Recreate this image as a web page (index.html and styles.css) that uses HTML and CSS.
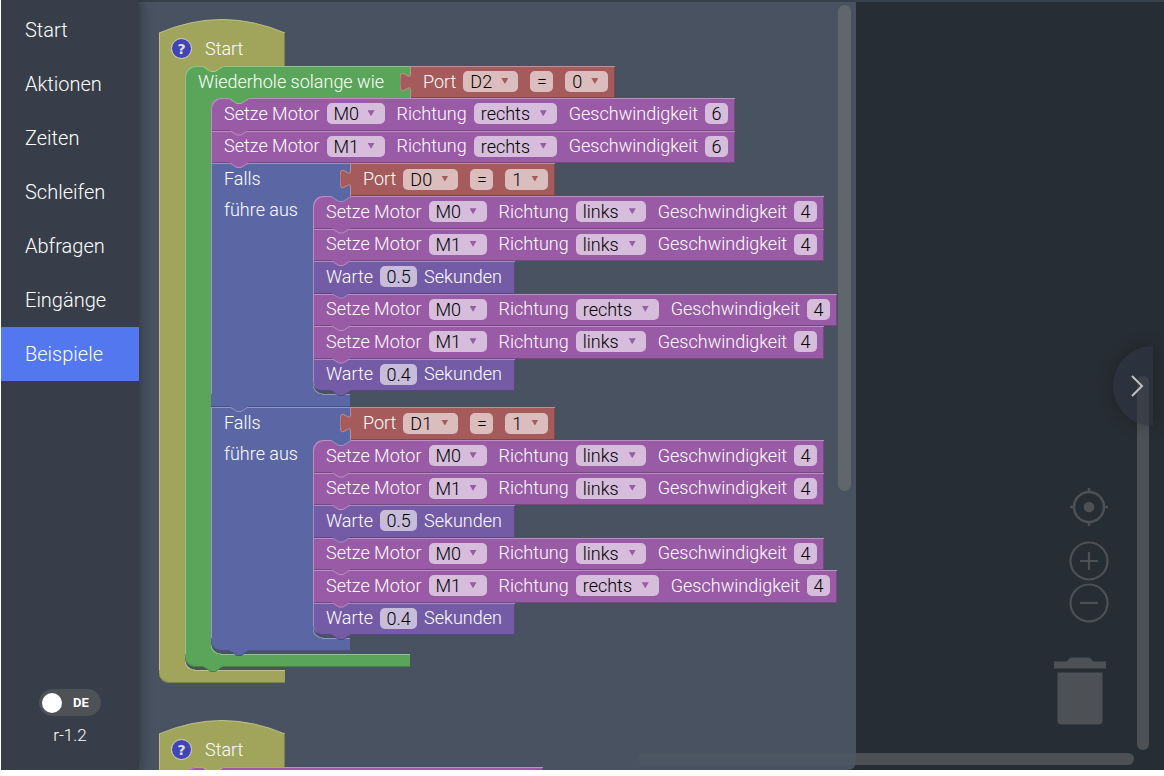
FILE: index.html
```html
<!DOCTYPE html>
<html lang="de">
<head>
<meta charset="utf-8">
<title>Beispiele</title>
<link rel="stylesheet" href="styles.css">
</head>
<body>
<svg class="defs" aria-hidden="true">
  <symbol id="plug" viewBox="-8 0 9 15"><path d="M1 0H0C0 10-8-8-8 7.5S0 5 0 15H1z" fill="#a55b5b"/><path d="M0 0C0 10-8-8-8 7.5S0 5 0 15" fill="none" stroke="#c08c8c" stroke-width=".8"/></symbol>
  <symbol id="hat" viewBox="0 0 126 14"><path d="M0 14Q63-13 126 14z" fill="#a0a55b"/><path d="M0 14Q63-13 126 14" fill="none" stroke="#bdc08c"/></symbol>
</svg>
<div class="app">
  <aside class="sidebar">
    <nav class="menu">
      <a href="#start">Start</a>
      <a href="#aktionen">Aktionen</a>
      <a href="#zeiten">Zeiten</a>
      <a href="#schleifen">Schleifen</a>
      <a href="#abfragen">Abfragen</a>
      <a href="#eingaenge">Eingänge</a>
      <a href="#beispiele" class="active">Beispiele</a>
    </nav>
    <div class="side-foot">
      <button class="lang" type="button"><span class="knob"></span>DE</button>
      <span class="version">r-1.2</span>
    </div>
  </aside>

  <main class="workspace">
    <div class="hbar"></div>
    <div class="vbar"></div>
    <button class="drawer" type="button" aria-label="Öffnen"><svg width="14" height="22" viewBox="0 0 14 22"><path d="M2 1l10 10L2 21" fill="none" stroke="#bfc1c4" stroke-width="2"/></svg></button>
    <div class="tools">
      <button type="button" aria-label="Zentrieren"><svg width="40" height="40" viewBox="0 0 40 40"><circle cx="20" cy="20" r="15" fill="none" stroke="currentColor" stroke-width="2.5"/><circle cx="20" cy="20" r="5.3" fill="currentColor"/><path d="M20 1v4M20 35v4M1 20h4M35 20h4" stroke="currentColor" stroke-width="2.5"/></svg></button>
      <button type="button" class="zoom-in" aria-label="Vergrößern"><svg width="40" height="40" viewBox="0 0 40 40"><circle cx="20" cy="20" r="18.5" fill="none" stroke="currentColor" stroke-width="2.2"/><path d="M20 11v18M11 20h18" stroke="currentColor" stroke-width="2.2"/></svg></button>
      <button type="button" class="zoom-out" aria-label="Verkleinern"><svg width="40" height="40" viewBox="0 0 40 40"><circle cx="20" cy="20" r="18.5" fill="none" stroke="currentColor" stroke-width="2.2"/><path d="M11 20h18" stroke="currentColor" stroke-width="2.2"/></svg></button>
    </div>
    <svg class="trash" width="54" height="68" viewBox="0 0 54 68"><path d="M1 4.500h13q2-4 5-4h16q3 0 5 4h13v7H1zM4.500 15.500h45v48q0 4-4 4h-37q-4 0-4-4z" fill="#4d5055"/></svg>

    <section class="flyout">
      <div class="flybar"></div>

      <div class="wrap start">
        <svg class="hat"><use href="#hat"/></svg>
        <div class="head"><div class="cap"><button class="help" type="button">?</button><span>Start</span></div></div>
        <div class="mid">
          <div class="rail"></div>
          <div class="stack">
            <div class="wrap loop last">
              <div class="head">
                <div class="cap">Wiederhole solange wie</div>
                <div class="block port"><svg class="plug"><use href="#plug"/></svg><span>Port</span><span class="field w55"><select aria-label="Port"><option>D2</option></select></span><input class="val" aria-label="Vergleich" value="="><span class="field w43"><select aria-label="Wert"><option>0</option></select></span></div>
              </div>
              <div class="mid">
                <div class="rail"></div>
                <div class="stack">
                  <div class="rows two">
                    <div class="block motor"><span>Setze Motor</span><span class="field w58"><select aria-label="Motor"><option>M0</option></select></span><span>Richtung</span><span class="field w83"><select aria-label="Richtung"><option>rechts</option></select></span><span>Geschwindigkeit</span><input class="val" aria-label="Geschwindigkeit" value="6"></div>
                    <div class="block motor"><span>Setze Motor</span><span class="field w58"><select aria-label="Motor"><option>M1</option></select></span><span>Richtung</span><span class="field w83"><select aria-label="Richtung"><option>rechts</option></select></span><span>Geschwindigkeit</span><input class="val" aria-label="Geschwindigkeit" value="6"></div>
                  </div>
                  <div class="wrap cond">
                    <div class="head">
                      <div class="cap">Falls</div>
                      <div class="block port"><svg class="plug"><use href="#plug"/></svg><span>Port</span><span class="field w55"><select aria-label="Port"><option>D0</option></select></span><input class="val" aria-label="Vergleich" value="="><span class="field w43"><select aria-label="Wert"><option>1</option></select></span></div>
                    </div>
                    <div class="mid">
                      <div class="rail">führe aus</div>
                      <div class="stack">
                        <div class="rows six">
                          <div class="block motor"><span>Setze Motor</span><span class="field w58"><select aria-label="Motor"><option>M0</option></select></span><span>Richtung</span><span class="field w70"><select aria-label="Richtung"><option>links</option></select></span><span>Geschwindigkeit</span><input class="val" aria-label="Geschwindigkeit" value="4"></div>
                          <div class="block motor"><span>Setze Motor</span><span class="field w58"><select aria-label="Motor"><option>M1</option></select></span><span>Richtung</span><span class="field w70"><select aria-label="Richtung"><option>links</option></select></span><span>Geschwindigkeit</span><input class="val" aria-label="Geschwindigkeit" value="4"></div>
                          <div class="block wait"><span>Warte</span><input class="val wide" aria-label="Sekunden" value="0.5"><span>Sekunden</span></div>
                          <div class="block motor"><span>Setze Motor</span><span class="field w58"><select aria-label="Motor"><option>M0</option></select></span><span>Richtung</span><span class="field w83"><select aria-label="Richtung"><option>rechts</option></select></span><span>Geschwindigkeit</span><input class="val" aria-label="Geschwindigkeit" value="4"></div>
                          <div class="block motor"><span>Setze Motor</span><span class="field w58"><select aria-label="Motor"><option>M1</option></select></span><span>Richtung</span><span class="field w70"><select aria-label="Richtung"><option>links</option></select></span><span>Geschwindigkeit</span><input class="val" aria-label="Geschwindigkeit" value="4"></div>
                          <div class="block wait"><span>Warte</span><input class="val wide" aria-label="Sekunden" value="0.4"><span>Sekunden</span></div>
                        </div>
                      </div>
                    </div>
                    <div class="foot"></div>
                  </div>
                  <div class="wrap cond last">
                    <div class="head">
                      <div class="cap">Falls</div>
                      <div class="block port"><svg class="plug"><use href="#plug"/></svg><span>Port</span><span class="field w55"><select aria-label="Port"><option>D1</option></select></span><input class="val" aria-label="Vergleich" value="="><span class="field w43"><select aria-label="Wert"><option>1</option></select></span></div>
                    </div>
                    <div class="mid">
                      <div class="rail">führe aus</div>
                      <div class="stack">
                        <div class="rows six">
                          <div class="block motor"><span>Setze Motor</span><span class="field w58"><select aria-label="Motor"><option>M0</option></select></span><span>Richtung</span><span class="field w70"><select aria-label="Richtung"><option>links</option></select></span><span>Geschwindigkeit</span><input class="val" aria-label="Geschwindigkeit" value="4"></div>
                          <div class="block motor"><span>Setze Motor</span><span class="field w58"><select aria-label="Motor"><option>M1</option></select></span><span>Richtung</span><span class="field w70"><select aria-label="Richtung"><option>links</option></select></span><span>Geschwindigkeit</span><input class="val" aria-label="Geschwindigkeit" value="4"></div>
                          <div class="block wait"><span>Warte</span><input class="val wide" aria-label="Sekunden" value="0.5"><span>Sekunden</span></div>
                          <div class="block motor"><span>Setze Motor</span><span class="field w58"><select aria-label="Motor"><option>M0</option></select></span><span>Richtung</span><span class="field w70"><select aria-label="Richtung"><option>links</option></select></span><span>Geschwindigkeit</span><input class="val" aria-label="Geschwindigkeit" value="4"></div>
                          <div class="block motor"><span>Setze Motor</span><span class="field w58"><select aria-label="Motor"><option>M1</option></select></span><span>Richtung</span><span class="field w83"><select aria-label="Richtung"><option>rechts</option></select></span><span>Geschwindigkeit</span><input class="val" aria-label="Geschwindigkeit" value="4"></div>
                          <div class="block wait"><span>Warte</span><input class="val wide" aria-label="Sekunden" value="0.4"><span>Sekunden</span></div>
                        </div>
                      </div>
                    </div>
                    <div class="foot"></div>
                  </div>
                </div>
              </div>
              <div class="foot"></div>
            </div>
          </div>
        </div>
        <div class="foot"></div>
      </div>

      <div class="wrap start">
        <svg class="hat"><use href="#hat"/></svg>
        <div class="head"><div class="cap"><button class="help" type="button">?</button><span>Start</span></div></div>
        <div class="mid">
          <div class="rail"></div>
          <div class="stack"><div class="rows two"><div class="block motor empty"></div></div></div>
        </div>
      </div>
    </section>
  </main>
</div>
</body>
</html>
```
FILE: styles.css
```css
* { box-sizing: border-box; }
html { background: #fff; }
body {
  margin: 0;
  padding: 0 0 6px 1px;
  height: 100vh;
  overflow: hidden;
  font: 300 18px/22px Roboto, "Open Sans", sans-serif;
  color: #fff;
}
button, input, select {
  margin: 0;
  padding: 0;
  border: 0;
  background: none;
  font: inherit;
  color: inherit;
}
.defs { position: absolute; width: 0; height: 0; }
.app { display: flex; height: 100%; overflow: hidden; background: #272d34; }

/* Sidebar */
.sidebar {
  position: relative;
  z-index: 2;
  flex: 0 0 138px;
  display: flex;
  flex-direction: column;
  justify-content: space-between;
  padding: 3px 0 24px;
  background: #373e49;
  box-shadow: 0 0 12px rgba(0, 0, 0, .4);
}
.menu a {
  display: block;
  padding: 0 24px;
  font-size: 20px;
  line-height: 54px;
  color: #fff;
  text-decoration: none;
}
.menu .active { background: #5277ee; }
.side-foot { display: flex; flex-direction: column; align-items: center; gap: 8px; }
.lang {
  display: flex;
  align-items: center;
  gap: 11px;
  width: 62px;
  height: 27px;
  padding: 0 3px;
  border-radius: 14px;
  background: #4e5156;
  font-size: 13px;
  font-weight: 700;
}
.knob { width: 20px; height: 20px; border-radius: 50%; background: #fff; }
.version { font-size: 17px; }

/* Workspace */
.workspace { position: relative; flex: 1; min-width: 0; padding-top: 2px; overflow: hidden; }
.workspace::before { content: ""; position: absolute; inset: 0 0 auto; height: 2px; background: #35404b; }
.hbar { position: absolute; right: 30px; bottom: 5px; width: 496px; height: 12px; border-radius: 6px; background: #4d5055; }
.vbar { position: absolute; right: 15px; bottom: 20px; width: 12px; height: 374px; border-radius: 6px; background: #4d5055; }
.drawer {
  position: absolute;
  right: 11px;
  top: 346px;
  width: 40px;
  height: 80px;
  padding-left: 8px;
  border-radius: 40px 0 0 40px;
  background: rgba(47, 54, 66, .65);
  box-shadow: 0 0 16px rgba(0, 0, 0, .25);
}
.drawer svg { display: block; margin: 0 auto; }
.tools { position: absolute; right: 55px; bottom: 147px; display: flex; flex-direction: column; color: #4d5055; }
.tools button { height: 40px; color: inherit; }
.tools svg { display: block; }
.tools .zoom-in { margin-top: 14px; }
.tools .zoom-out { margin-top: 2px; }
.trash { position: absolute; right: 57px; bottom: 45px; }

/* Flyout */
.flyout {
  position: relative;
  isolation: isolate;
  width: calc(70% - 1px);
  height: 100%;
  padding: 17px 0 0 20px;
  overflow: hidden;
  border-radius: 0 0 8px 0;
  background: rgba(77, 87, 101, .9);
}
.flybar { position: absolute; right: 5px; top: 3px; width: 13px; height: 486px; border-radius: 7px; background: #5f676d; }

/* Blocks */
.start { --c: #a0a55b; --w: 126px; --rail: 26px; margin-bottom: 37px; }
.loop { --c: #5ba55b; --w: 225px; --rail: 26px; }
.cond { --c: #5b67a5; --w: 139px; --rail: 102px; }
.port { --c: #a55b5b; }
.motor { --c: #995ba5; }
.wait { --c: #745ba5; }
.wrap, .block {
  position: relative;
  --light: color-mix(in srgb, var(--c), #fff 32%);
  --dark: color-mix(in srgb, var(--c), #000 22%);
}
.wrap { width: max-content; }
.head { display: flex; height: 32px; }
.cond > .head { height: 33px; }
.start > .head { height: 33px; }
.cap {
  display: flex;
  align-items: center;
  width: var(--w);
  padding-left: 13px;
  background: var(--c);
  box-shadow: inset 1px 1px 0 var(--light);
}
.start > .head > .cap { gap: 13px; padding: 0 0 2px 12px; box-shadow: inset 1px 0 0 var(--light), inset -1px 0 0 var(--dark); }
.cond > .head > .cap { padding-bottom: 2px; }
.loop > .head > .cap { border-top-left-radius: 10px; }
.hat { display: block; width: 126px; height: 14px; }
.help {
  width: 21px;
  height: 21px;
  border: 1px solid #d9dab8;
  border-radius: 50%;
  background: #4044b8;
  font: 700 14px/18px "DejaVu Sans", sans-serif;
  color: #e0e0d0;
}
.mid { display: flex; }
.rail {
  width: var(--rail);
  padding: 3px 0 0 13px;
  background: var(--c);
  box-shadow: inset 1px 0 0 var(--light);
}
.foot { width: var(--w); height: 13px; background: var(--c); box-shadow: inset 0 -1px 0 var(--dark); }
.foot::before { content: ""; display: block; height: 1px; margin-left: calc(var(--rail) + 9px); background: var(--light); }
.last > .foot, .start > .foot { border-bottom-left-radius: 10px; }
.stack {
  position: relative;
  padding-bottom: 3px;
  background:
    linear-gradient(var(--c), var(--c)) 0 0 / 10px 10px no-repeat,
    radial-gradient(circle at 10px 0, transparent 9px, var(--light) 10px, var(--c) 11px) 0 100% / 10px 10px no-repeat;
}
.rows { display: grid; grid-auto-rows: 1fr; justify-items: start; }
.two { height: 65px; }
.six { height: 195px; }
.block {
  display: flex;
  align-items: center;
  gap: 7px;
  padding: 0 7px 1px 13px;
  background: var(--c);
  box-shadow: inset 1px 1px 0 var(--light), inset -1px -1px 0 var(--dark);
  white-space: nowrap;
}
.rows .block:first-child { border-top-left-radius: 10px; }
.six .block:last-child { border-bottom-left-radius: 10px; }
.wait { padding-right: 13px; }
.empty { width: 358px; }
.field + span { margin-left: 5px; }
.field + .val, .val + .field { margin-left: 5px; }

/* Notches that join stacked blocks */
.rows .block::before, .rows .block::after,
.loop::before, .loop::after, .cond::before, .cond::after,
.stack::before, .stack::after {
  content: "";
  position: absolute;
  z-index: 1;
  left: 18px;
  width: 20px;
  height: 6px;
  clip-path: polygon(0 0, 8px 5px, 12px 5px, 20px 0);
  background: var(--c);
}
.rows .block::before, .loop::before, .cond::before { bottom: -6px; background: var(--light); }
.rows .block::after, .loop::after, .cond::after { bottom: -5px; }
.six .block:last-child::before, .last::before { background: var(--dark); }
.stack::before { top: 1px; background: var(--light); }
.stack::after { top: 0; }
.plug { position: absolute; z-index: 1; left: -10px; top: 6px; width: 12px; height: 20px; }

/* Fields */
.field { position: relative; display: block; height: 21px; }
.field select, .val {
  display: block;
  width: 100%;
  height: 21px;
  border-radius: 5px;
  background: rgba(255, 255, 255, .6);
  line-height: 21px;
  color: #000;
}
.field select { appearance: none; padding-left: 7px; }
.field::after {
  content: "";
  position: absolute;
  right: 10px;
  top: 7px;
  width: 7px;
  height: 6px;
  clip-path: polygon(0 0, 100% 0, 50% 100%);
  background: var(--c);
  pointer-events: none;
}
.val { width: 23px; text-align: center; }
.val.wide { width: 37px; }
.w43 { width: 43px; }
.w55 { width: 55px; }
.w58 { width: 58px; }
.w70 { width: 70px; }
.w83 { width: 83px; }
```
